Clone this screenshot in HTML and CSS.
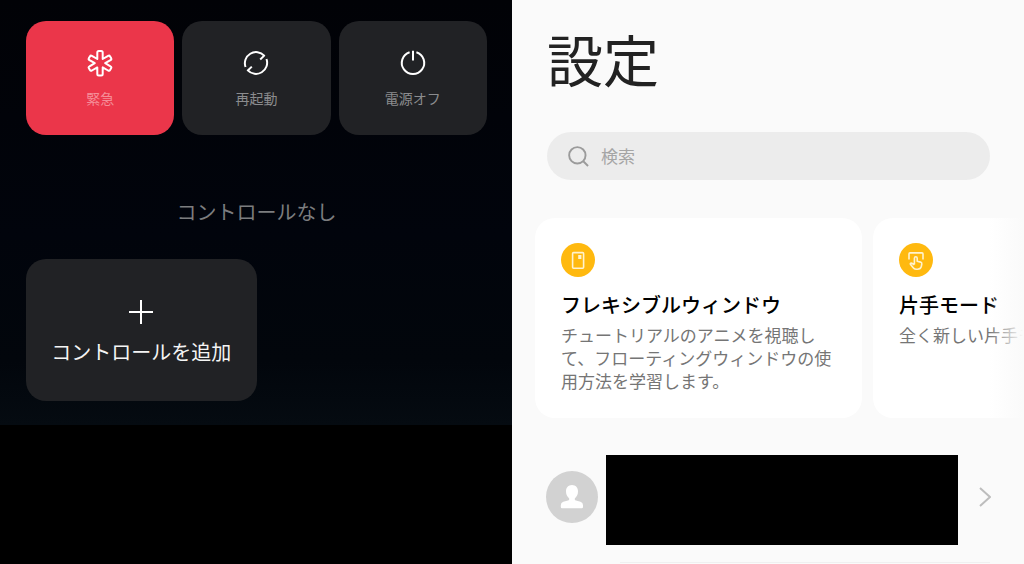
FILE: index.html
```
<!DOCTYPE html>
<html lang="ja">
<head>
<meta charset="utf-8">
<meta name="viewport" content="width=device-width, initial-scale=1">
<title>設定</title>
<link rel="stylesheet" href="styles.css">
</head>
<body>
<div class="screens">
  <section class="power" aria-label="電源メニュー">
    <div class="power-body">
      <div class="power-actions">
        <button class="tile tile-emergency" type="button">
          <svg class="tile-icon" viewBox="0 0 28 28" aria-hidden="true"><path d="M11.3 3.4Q11.3 1.9 12.8 1.9H15.2Q16.7 1.9 16.7 3.4V10L22.1 6.9Q23.4 6.2 24.1 7.4L25.1 9.1Q25.8 10.4 24.5 11.1L19.2 14.2L24.5 17.3Q25.8 18 25.1 19.3L24.1 21Q23.4 22.2 22.1 21.5L16.7 18.4V25Q16.7 26.5 15.2 26.5H12.8Q11.3 26.5 11.3 25V18.4L5.9 21.5Q4.6 22.2 3.9 21L2.9 19.3Q2.2 18 3.5 17.3L8.8 14.2L3.5 11.1Q2.2 10.4 2.9 9.1L3.9 7.4Q4.6 6.2 5.9 6.9L11.3 10Z"/></svg>
          <span>緊急</span>
        </button>
        <button class="tile" type="button">
          <svg class="tile-icon" viewBox="0 0 28 28" aria-hidden="true"><path d="M3.5 18A11.2 11.2 0 0 1 22.2 6.6L18.2 10.4M24.5 10A11.2 11.2 0 0 1 5.8 21.4L9.8 17.6"/></svg>
          <span>再起動</span>
        </button>
        <button class="tile" type="button">
          <svg class="tile-icon" viewBox="0 0 28 28" aria-hidden="true"><path d="M10.6 3.2A11.2 11.2 0 1 0 17.4 3.2M14 1.8V11.6"/></svg>
          <span>電源オフ</span>
        </button>
      </div>
      <p class="power-empty">コントロールなし</p>
      <button class="add-control" type="button">
        <svg class="add-icon" viewBox="0 0 24 24" aria-hidden="true"><path d="M12 0V24M0 12H24"/></svg>
        <span>コントロールを追加</span>
      </button>
    </div>
  </section>

  <main class="settings">
    <h1 class="settings-title">設定</h1>
    <label class="search">
      <svg class="search-icon" viewBox="0 0 22 22" aria-hidden="true"><circle cx="9.8" cy="9.8" r="8.6"/><path d="M16 16L21 21"/></svg>
      <input class="search-input" type="search" placeholder="検索" aria-label="検索">
    </label>
    <div class="tips">
      <article class="tip">
        <svg class="tip-icon" viewBox="0 0 34 34" aria-hidden="true"><circle class="tip-disc" cx="17" cy="17" r="17"/><rect x="11.6" y="9.6" width="11" height="15.6" rx="1"/><rect class="tip-fill" x="17.2" y="12" width="3.2" height="4"/></svg>
        <h2 class="tip-title">フレキシブルウィンドウ</h2>
        <p class="tip-text">チュートリアルのアニメを視聴して、フローティングウィンドウの使用方法を学習します。</p>
      </article>
      <article class="tip">
        <svg class="tip-icon" viewBox="0 0 34 34" aria-hidden="true"><circle class="tip-disc" cx="17" cy="17" r="17"/><path d="M10 16.6V10.9Q10 9.9 11 9.9H23Q24 9.9 24 10.9V16.6"/><path d="M15.4 21.5V15.2Q15.4 13.7 16.8 13.7Q18.2 13.7 18.2 15.2V18.3L21.6 19.1Q23 19.5 22.8 21L22.4 23.2Q21.6 26.2 18.6 26.2H17Q15.2 26.2 14 24.6L11.4 21.3Q11 20.2 12.2 20.1Q13.2 20 15.4 21.8"/></svg>
        <h2 class="tip-title">片手モード</h2>
        <p class="tip-text">全く新しい片手モード</p>
      </article>
    </div>
    <a class="account" href="#account" aria-label="アカウント">
      <svg class="avatar" viewBox="0 0 52 52" aria-hidden="true"><circle class="avatar-disc" cx="26" cy="26" r="26"/><path class="avatar-person" d="M26 14C29.7 14 32 16.8 32 20.2C32 23.5 30.9 25.2 29 27.2C28.3 28.1 28.8 29.1 30 29.5L34.5 30.8Q37 31.7 37 34.2V36Q37 37.2 35.8 37.2H16Q14.8 37.2 14.8 36V34.2Q14.8 31.7 17.3 30.8L22 29.5C23.2 29.1 23.7 28.1 23 27.2C21.1 25.2 20 23.5 20 20.2C20 16.8 22.3 14 26 14Z"/></svg>
      <span class="account-mask"></span>
      <svg class="chevron" viewBox="0 0 12 20" aria-hidden="true"><path d="M1 1L11 10L1 19"/></svg>
    </a>
    <hr class="divider">
  </main>
</div>
</body>
</html>
```
FILE: styles.css
```
* {
  box-sizing: border-box;
}

body {
  margin: 0;
  background: #000;
  font-family: "Noto Sans CJK JP", "Noto Sans", sans-serif;
}

button,
input {
  font: inherit;
}

h1,
h2,
p {
  margin: 0;
  font-weight: 400;
}

svg {
  display: block;
  flex: none;
  fill: none;
  stroke-linejoin: round;
}

.screens {
  display: grid;
  grid-template-columns: 1fr 1fr;
  min-height: 100vh;
}

/* Power menu */
.power {
  background: #000;
}

.power-body {
  padding: 21px 25px 24px 26px;
  background: linear-gradient(#010206, #01040c 55%, #02060c 85%, #050b11);
}

.power-actions {
  display: grid;
  grid-template-columns: repeat(3, 1fr);
  gap: 8px;
}

.tile,
.add-control {
  display: flex;
  flex-direction: column;
  align-items: center;
  border: 0;
  border-radius: 20px;
  background: #212225;
}

.tile {
  gap: 11px;
  padding: 28px 8px 27px;
  color: #8b8c8e;
  font-size: 14px;
  line-height: 20px;
}

.tile-emergency {
  background: #eb364a;
  color: #f58d98;
}

.tile-icon {
  width: 28px;
  height: 28px;
  stroke: #fff;
  stroke-width: 2;
}

.power-empty {
  margin: 63px 0 33px;
  color: #7c7d7f;
  font-size: 20px;
  line-height: 28px;
  text-align: center;
}

.add-control {
  gap: 14px;
  width: 50%;
  padding: 41px 8px 35px;
  color: #f4f4f4;
  font-size: 20px;
  line-height: 28px;
  white-space: nowrap;
}

.add-icon {
  width: 24px;
  height: 24px;
  stroke: #fff;
  stroke-width: 2;
}

/* Settings */
.settings {
  min-width: 0;
  padding: 18px 1px 0 23px;
  background: #fafafa;
}

.settings-title {
  padding-left: 12px;
  color: #222;
  font-size: 56px;
  line-height: 80px;
}

.search {
  display: flex;
  align-items: center;
  gap: 12px;
  height: 48px;
  margin: 34px 33px 38px 12px;
  padding: 0 21px;
  border-radius: 24px;
  background: #ececec;
}

.search-icon {
  width: 21px;
  height: 21px;
  stroke: #9b9b9b;
  stroke-width: 2;
}

.search-input {
  flex: 1;
  min-width: 0;
  padding: 0;
  border: 0;
  outline: 0;
  background: transparent;
  color: #222;
  font-size: 17px;
  line-height: 24px;
}

.search-input::placeholder {
  color: #a5a5a5;
  opacity: 1;
}

.tips {
  position: relative;
  display: flex;
  gap: 11px;
  overflow: hidden;
}

.tips::after {
  content: "";
  position: absolute;
  inset: 0 0 0 auto;
  width: 34px;
  background: linear-gradient(to right, #fafafa00, #fafafa);
}

.tip {
  flex: none;
  width: 67%;
  padding: 25px 26px 26px;
  border-radius: 20px;
  background: #fff;
}

.tip-icon {
  width: 34px;
  height: 34px;
  stroke: #fff3cf;
  stroke-width: 1.6;
}

.tip-disc {
  fill: #ffb90f;
  stroke: none;
}

.tip-fill {
  fill: #fff3cf;
  stroke: none;
}

.tip-title {
  margin: 15px 0 5px;
  color: #000;
  font-size: 20px;
  font-weight: 500;
  line-height: 26px;
}

.tip-text {
  color: #757575;
  font-size: 17px;
  line-height: 23px;
}

/* The avatar and chevron centre on the row, the mask hangs below it */
.account {
  display: flex;
  align-items: center;
  margin: 31px 32px 17px 11px;
}

.avatar {
  width: 52px;
  height: 52px;
}

.avatar-disc {
  fill: #d2d2d2;
}

.avatar-person {
  fill: #fff;
}

.account-mask {
  flex: 1;
  height: 90px;
  margin: 6px 21px 0 8px;
  background: #000;
}

.account-mask,
.chevron {
  flex-shrink: 0;
}

.chevron {
  width: 12px;
  height: 20px;
  stroke: #bdbdbd;
  stroke-width: 2;
}

.divider {
  height: 1px;
  margin: 0 33px 0 85px;
  border: 0;
  background: #f0f0f0;
}
```
